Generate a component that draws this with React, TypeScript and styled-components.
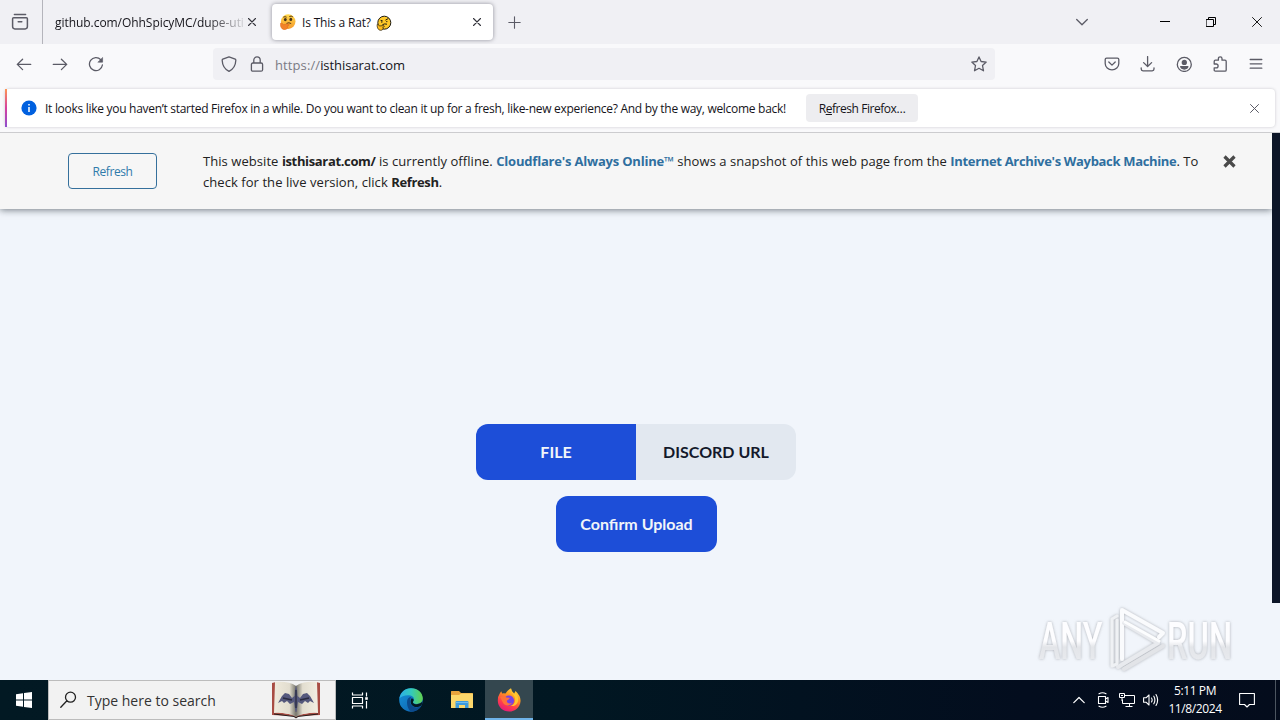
import * as React from "react";
import { FC, ReactNode } from "react";
import styled, { createGlobalStyle } from "styled-components";

const GlobalStyle = createGlobalStyle`
  * {
    box-sizing: border-box;
  }

  body {
    margin: 0;
    overflow: hidden;
    font-family: "Open Sans", "Noto Sans", sans-serif;
    color: #15141a;
  }

  svg {
    display: block;
    flex: none;
  }
`;

type IconProps = {
  size?: number;
  color?: string;
  weight?: number;
  children: ReactNode;
};

const Icon: FC<IconProps> = ({ size = 16, color = "#5b5b66", weight = 1.3, children }) => (
  <svg
    width={size}
    height={size}
    viewBox={`0 0 ${size} ${size}`}
    fill="none"
    stroke={color}
    strokeWidth={weight}
    strokeLinecap="round"
    strokeLinejoin="round"
  >
    {children}
  </svg>
);

const CrossIcon: FC<{ size: number; color: string; weight: number }> = (props) => (
  <Icon {...props}>
    <path d={`M.5 .5L${props.size - 0.5} ${props.size - 0.5}M${props.size - 0.5} .5L.5 ${props.size - 0.5}`} />
  </Icon>
);

const ThinkingFace: FC = () => (
  <svg width="16" height="16" viewBox="0 0 16 16">
    <defs>
      <linearGradient id="face" x1="0" y1="0" x2="0" y2="1">
        <stop offset="0" stopColor="#ffd84a" />
        <stop offset="1" stopColor="#f59a2c" />
      </linearGradient>
    </defs>
    <circle cx="8.2" cy="7.6" r="7.3" fill="url(#face)" />
    <ellipse cx="5.3" cy="5.6" rx="1.4" ry="1.6" fill="#42301a" />
    <ellipse cx="10.8" cy="5.4" rx="1.4" ry="1.6" fill="#42301a" />
    <path d="M3.3 3.2Q5 2.2 6.6 3.2M9.3 2.6Q11.2 1.5 12.8 2.8M6.5 9.4Q9 8 11.2 9.6" fill="none" stroke="#5a3a16" strokeWidth="1" />
    <path
      d="M.6 9.2C1.8 8.4 2.8 9.7 3.2 10.8L8.3 9.9C9.6 10 9.4 11.5 8.4 11.7L7 12C8.2 13 7.6 15.2 5.3 15.6C2.2 16 0 13.2 .6 9.2Z"
      fill="#f2832a"
      stroke="#e06d1c"
      strokeWidth=".6"
    />
  </svg>
);

const OutlinedFace: FC = () => (
  <svg width="16" height="16" viewBox="0 0 16 16" fill="none" stroke="#1d1a12" strokeWidth="1">
    <circle cx="8.3" cy="7.7" r="6.5" fill="#ffc928" />
    <path d="M4.6 5.4L6.6 5.8M9.4 5.2L12.2 3.6M6.4 9.7Q8.5 8.4 11 9.2" />
    <circle cx="5.8" cy="7" r=".7" fill="#1d1a12" stroke="none" />
    <circle cx="10.8" cy="6.6" r=".7" fill="#1d1a12" stroke="none" />
    <path
      d="M1.2 9.4C2 8.8 3 10.2 3.3 11L7.6 10.6C8.6 10.8 8.6 11.8 7.6 12L6.8 12.2C7.6 13.4 7 15 5.2 15.3C2.6 15.6 .8 13 1.2 9.4Z"
      fill="#ffbd1e"
      strokeWidth=".7"
    />
  </svg>
);

const TitleBar: FC = () => (
  <TabStrip>
    <ViewButton>
      <Icon size={18} weight={1.5}>
        <path d="M3.4 1.6H14.6M2.6 4.8H15.4Q16.4 4.8 16.4 5.8V13.6Q16.4 15.9 14.1 15.9H3.9Q1.6 15.9 1.6 13.6V5.8Q1.6 4.8 2.6 4.8ZM7.2 8.8H10.8" />
      </Icon>
    </ViewButton>
    <Tab>
      <TabTitle $fade $spacing={-0.05}>
        github.com/OhhSpicyMC/dupe-uti
      </TabTitle>
      <CrossIcon size={8} color="#33333b" weight={1.1} />
    </Tab>
    <Tab $active>
      <ThinkingFace />
      <TabTitle $spacing={-0.18}>
        Is This a Rat?
        <OutlinedFace />
      </TabTitle>
      <CrossIcon size={8} color="#33333b" weight={1.1} />
    </Tab>
    <NewTab>
      <Icon size={13} weight={1.1}>
        <path d="M6.5 .8V12.2M.8 6.5H12.2" />
      </Icon>
    </NewTab>
    <TabsChevron>
      <Icon size={12}>
        <path d="M.7 3.5L6 8.8L11.3 3.5" />
      </Icon>
    </TabsChevron>
    <WindowButton>
      <Icon size={10} color="#000" weight={1}>
        <path d="M0 4.5H10" />
      </Icon>
    </WindowButton>
    <WindowButton>
      <Icon size={10} color="#000" weight={1}>
        <path d="M.5 2.5H7.5V9.5H.5ZM2.5 2.5V.5H9.5V7.5H7.5" />
      </Icon>
    </WindowButton>
    <WindowButton>
      <CrossIcon size={10} color="#000" weight={0.9} />
    </WindowButton>
  </TabStrip>
);

const NavBar: FC = () => (
  <Toolbar>
    <ToolGroup>
      <ToolButton>
        <Icon>
          <path d="M14.7 8.4H1.3M6.6 3.2L1.3 8.4L6.6 13.6" />
        </Icon>
      </ToolButton>
      <ToolButton>
        <Icon>
          <path d="M1.3 8.4H14.7M9.4 3.2L14.7 8.4L9.4 13.6" />
        </Icon>
      </ToolButton>
      <ToolButton>
        <Icon>
          <path d="M12.8 3.8A6.5 6.5 0 1 0 14.4 9" />
          <path d="M14.6 1.8V6.2H10.2Z" fill="#5b5b66" strokeWidth=".6" />
        </Icon>
      </ToolButton>
    </ToolGroup>
    <UrlBar>
      <Icon>
        <path d="M8 .8L14.2 3.2Q14.9 3.5 14.8 4.4C14.6 9.6 12.4 13 8 15.3C3.6 13 1.4 9.6 1.2 4.4Q1.1 3.5 1.8 3.2Z" />
      </Icon>
      <Icon>
        <path d="M4.8 7V4.1A3.2 3.2 0 0 1 11.2 4.1V7M3.9 7H12.1Q13.6 7 13.6 8.5V13.7Q13.6 15.2 12.1 15.2H3.9Q2.4 15.2 2.4 13.7V8.5Q2.4 7 3.9 7Z" />
      </Icon>
      <Address>
        <Scheme>https://</Scheme>isthisarat.com
      </Address>
      <Icon>
        <path d="M8 .9L10.1 5.5L15.2 6.1L11.5 9.5L12.5 14.8L8 12.3L3.5 14.8L4.5 9.5L.8 6.1L5.9 5.5Z" />
      </Icon>
    </UrlBar>
    <ToolGroup>
      <ToolButton>
        <Icon>
          <path d="M2.6 2.2H13.4Q14.8 2.2 14.8 3.6V7.4A6.8 6.4 0 0 1 1.2 7.4V3.6Q1.2 2.2 2.6 2.2ZM4.8 6L8 9.1L11.2 6" />
        </Icon>
      </ToolButton>
      <ToolButton>
        <Icon>
          <path d="M7.6 .6V10.4M3.6 6.6L7.6 10.5L11.6 6.6M1.2 11.8V13Q1.2 14.8 3 14.8H12.2Q14 14.8 14 13V11.8" />
        </Icon>
      </ToolButton>
      <ToolButton>
        <Icon>
          <circle cx="8.3" cy="8.4" r="7" />
          <circle cx="8.3" cy="6.4" r="2" fill="#5b5b66" />
          <path d="M4.7 10.7H11.9Q11.3 13 8.3 13Q5.3 13 4.7 10.7Z" fill="#5b5b66" />
        </Icon>
      </ToolButton>
      <ToolButton>
        <Icon>
          <path d="M6.4 4.2V2.6A1.8 1.8 0 0 1 10 2.6V4.2H13Q14.2 4.2 14.2 5.4V13.9Q14.2 15.1 13 15.1H3.4Q2.2 15.1 2.2 13.9V11.8H4.2A1.9 1.9 0 0 0 4.2 8H2.2V5.4Q2.2 4.2 3.4 4.2Z" />
        </Icon>
      </ToolButton>
      <ToolButton>
        <Icon>
          <path d="M2.2 3.5H13.8M2.2 7.8H13.8M2.2 12.2H13.8" />
        </Icon>
      </ToolButton>
    </ToolGroup>
  </Toolbar>
);

const Notification: FC = () => (
  <NotificationArea>
    <NotificationBox>
      <svg width="16" height="16" viewBox="0 0 16 16">
        <circle cx="8" cy="8" r="7.6" fill="#0060df" />
        <path d="M8 4V5.4M8 7V12" stroke="#fff" strokeWidth="1.5" />
      </svg>
      <NotificationText>
        It looks like you haven’t started Firefox in a while. Do you want to clean it up for a fresh, like-new
        experience? And by the way, welcome back!
      </NotificationText>
      <NotificationButton>
        R<u>e</u>fresh Firefox…
      </NotificationButton>
      <CrossIcon size={9} color="#5b5b66" weight={1} />
    </NotificationBox>
  </NotificationArea>
);

const OfflineBanner: FC = () => (
  <Banner>
    <BannerButton>Refresh</BannerButton>
    <BannerText>
      This website <Strong>isthisarat.com/</Strong> is currently offline.{" "}
      <BannerLink $spacing={-0.2}>Cloudflare's Always Online™</BannerLink> shows a snapshot of this web page from the{" "}
      <BannerLink $spacing={-0.33}>Internet Archive's Wayback Machine</BannerLink>. To
      <br />
      check for the live version, click <Strong>Refresh</Strong>.
    </BannerText>
    <svg width="13" height="13" viewBox="0 0 13 13">
      <path d="M1.5 1.5L11.5 11.5M11.5 1.5L1.5 11.5" stroke="#4a4a4a" strokeWidth="3.2" />
    </svg>
  </Banner>
);

const Watermark: FC = () => (
  <WatermarkBox>
    <svg width="220" height="76" viewBox="0 0 220 76">
      <defs>
        <linearGradient id="mark" x1="0" y1="0" x2="0" y2="1">
          <stop offset=".5" stopColor="#fdfdff" />
          <stop offset=".6" stopColor="#e3e5e9" />
          <stop offset="1" stopColor="#eceef2" />
        </linearGradient>
        <filter id="markShadow" x="-10%" y="-10%" width="120%" height="120%">
          <feDropShadow dx="0" dy="0" stdDeviation="1.5" floodColor="#8d9096" floodOpacity=".7" />
        </filter>
      </defs>
      <g filter="url(#markShadow)">
        <g fill="url(#mark)" fontFamily="Roboto, sans-serif" fontSize="51" fontWeight="500">
          <text transform="translate(8 55) scale(.63 1)">ANY</text>
          <text transform="translate(136 55) scale(.64 1)">RUN</text>
        </g>
        <g fill="none" strokeLinejoin="round" strokeLinecap="round">
          <path d="M91 55V6L132 29L128 33" stroke="#fafbfd" strokeWidth="4" />
          <path d="M86 12L81 15V62L86 60V16" stroke="#eff1f4" strokeWidth="3" />
          <path d="M93 19L127 39L87 63" stroke="#e8eaee" strokeWidth="4" />
          <path d="M132 42L93 65" stroke="#e2e4e8" strokeWidth="4" />
          <path d="M94 18L128 37" stroke="#fcfdfe" strokeWidth="3" />
        </g>
      </g>
    </svg>
  </WatermarkBox>
);

const BookIcon: FC = () => (
  <svg width="48" height="38" viewBox="0 0 48 38">
    <defs>
      <linearGradient id="leftPage">
        <stop offset="0" stopColor="#efeadc" />
        <stop offset=".7" stopColor="#e2ddcf" />
        <stop offset="1" stopColor="#77766c" />
      </linearGradient>
      <linearGradient id="rightPage">
        <stop offset="0" stopColor="#77766c" />
        <stop offset=".3" stopColor="#e2ddcf" />
        <stop offset="1" stopColor="#f2eee2" />
      </linearGradient>
    </defs>
    <path d="M0 2L4 1V31L23 34L25 34L44 31V1L48 2V34L27 35L24 37L21 35L0 34Z" fill="#a84c43" />
    <path d="M3 1Q17 0 24 5V36Q15 31 2 32Z" fill="url(#leftPage)" />
    <path d="M45 1Q31 0 24 5V36Q33 31 46 32Z" fill="url(#rightPage)" />
    <path
      d="M24 4L25 9L25.5 15L28 17L31 13L35 12L38 15L42 22L38 20L36 22L33 20L30 23L26 21L24.5 31L23.5 31L22 21L18 23L15 20L12 22L10 20L6 22L10 15L13 12L17 13L20 17L22.5 15L23 9Z"
      fill="#55587c"
    />
    <path d="M11 17L20 19M37 17L28 19M24 9V27" stroke="#2a2b40" strokeWidth="1.3" />
    <path d="M2 33L22 35.5L24 37L26 35.5L46 33" fill="none" stroke="#231c1b" strokeWidth="1" />
  </svg>
);

const EdgeIcon: FC = () => (
  <svg width="24" height="24" viewBox="0 0 24 24">
    <defs>
      <linearGradient id="edgeTop">
        <stop offset="0" stopColor="#2caee8" />
        <stop offset=".5" stopColor="#33c9bd" />
        <stop offset="1" stopColor="#62d14c" />
      </linearGradient>
      <linearGradient id="edgeBase" x1="0" y1="0" x2="1" y2="1">
        <stop offset="0" stopColor="#1694db" />
        <stop offset="1" stopColor="#0d5ba8" />
      </linearGradient>
    </defs>
    <circle cx="12" cy="12" r="11.8" fill="url(#edgeBase)" />
    <path d="M.4 10.5C1.5 4 6 .2 12 .2C19 .2 23.8 5 23.8 10.3C23.8 14 21 16 17.8 16C15 16 13.5 15 14 13.8C16.4 11 14.3 7.5 10 7.2C5.6 7 1.8 8.4 .4 10.5Z" fill="url(#edgeTop)" />
    <path d="M8 14C8 10.8 10 9 12.2 9C10 12.5 10.7 18.8 17.3 19.4C19.5 19.5 21.3 18.7 22.4 17.8C20.2 21.7 16.5 23.9 12.3 23.8C9.6 22.2 8 18 8 14Z" fill="#0c4a8c" />
    <path d="M14.3 13.2C13.2 14.7 14.8 16.3 18 16.2C20.5 16 22.3 15 23.3 13.6C23.2 15.5 22.9 16.6 22.4 17.6C20 19.4 15.7 19.9 13 17.3C11.4 15.7 11 12 12.6 10.2C14.6 10.4 15.3 12 14.3 13.2Z" fill="#041923" />
  </svg>
);

const FolderIcon: FC = () => (
  <svg width="22" height="20" viewBox="0 0 22 20">
    <path d="M0 1.5Q0 1 .5 1H8L10 3H21Q22 3 22 4V18H0Z" fill="#e8a33d" />
    <path d="M1 5H8L10 3.5H22V18H0V5Z" fill="#fcd76b" />
    <path d="M4.5 18V12Q4.5 11 5.5 11H16.5Q17.5 11 17.5 12V18H14V15H8V18Z" fill="#3e9bdc" />
    <path d="M5 12.5H17" stroke="#6fbdf0" />
  </svg>
);

const FirefoxIcon: FC = () => (
  <svg width="24" height="24" viewBox="0 0 24 24">
    <defs>
      <linearGradient id="fox" x1=".8" y1="0" x2=".3" y2="1">
        <stop offset="0" stopColor="#ffe045" />
        <stop offset=".35" stopColor="#ff9a1f" />
        <stop offset=".7" stopColor="#ff3d4a" />
        <stop offset="1" stopColor="#e3197d" />
      </linearGradient>
    </defs>
    <path d="M2.6 5.8L4.2 3.3L5.2 5.4Q7 5 8.5 5.6Q10.7 2 14 .2Q14.3 3.5 17.2 5.4L18.5 3Q24 8 23.5 13.5C23 19.5 18 23.6 12.2 23.6C5.8 23.6 .8 18.8 .8 12.8Q.7 8.5 2.6 5.8Z" fill="url(#fox)" />
    <circle cx="12" cy="12.6" r="5.1" fill="#7542e5" />
    <path d="M3.2 9C5 7.7 8 8 9.3 9.4L12.7 9.8C12.8 11.3 10.4 11.8 9.8 12.7C9.7 15.4 12.7 16.2 15 14.8C13.5 18.2 7.8 18.4 5.8 14.5Z" fill="#ff7139" />
    <path d="M14 .4C13 5.1 18.4 6.3 18.2 12C18.1 15.4 16 17.5 13.5 18C20 18.8 23 13 20.1 7.2L18.3 4.2L17.6 6.4C15.3 5 14.2 2.5 14 .4Z" fill="#ffc72e" />
  </svg>
);

const Taskbar: FC = () => (
  <TaskbarBox>
    <StartButton>
      <svg width="16" height="16" viewBox="0 0 16 16" fill="#fff">
        <path d="M0 2.2L7 1.2V7.5H0ZM8 1L16 0V7.5H8ZM0 8.5H7V14.8L0 13.8ZM8 8.5H16V16L8 15Z" />
      </svg>
    </StartButton>
    <SearchBox>
      <Icon size={18} color="#222" weight={1.3}>
        <path d="M15.5 6.2A5 5 0 1 1 5.5 6.2A5 5 0 1 1 15.5 6.2ZM6.9 9.8L.8 16.2" />
      </Icon>
      <SearchText>Type here to search</SearchText>
      <BookIcon />
    </SearchBox>
    <TaskButton $width={48}>
      <Icon size={18} color="#fff" weight={1.2}>
        <path d="M1.5 1.5V4H11.5V1.5M1.5 6.5H11.5V12.5H1.5ZM1.5 17.5V15H11.5V17.5M15.5 1.5V5.5M15.5 10V17.5" strokeLinecap="butt" />
        <path d="M14.2 6.2H16.8V8.8H14.2Z" fill="#fff" stroke="none" />
      </Icon>
    </TaskButton>
    <TaskButton $width={54}>
      <EdgeIcon />
    </TaskButton>
    <TaskButton $width={47}>
      <FolderIcon />
    </TaskButton>
    <TaskButton $width={48} $active>
      <FirefoxIcon />
    </TaskButton>
    <Tray>
      <TrayCell>
        <Icon size={12} color="#fff" weight={1.2}>
          <path d="M.8 8.7L6 3.5L11.2 8.7" />
        </Icon>
      </TrayCell>
      <TrayCell>
        <Icon color="#fff" weight={1.1}>
          <path d="M3.5 4.5H10.5V11.5H3.5ZM10.5 7L13 5.5V10.5L10.5 9M4 1.8Q7.5 -.3 11 1.8M4 14.2Q7.5 16.3 11 14.2" />
        </Icon>
      </TrayCell>
      <TrayCell>
        <Icon color="#fff" weight={1}>
          <path d="M5.5 3.5H15.5V11.5H3.5V7.5M10.5 11.5V14.5M6.5 14.5H13.5M.5 1.5H5.5V5.5H.5ZM3 5.5V9M2 3.5H4" strokeLinecap="butt" />
        </Icon>
      </TrayCell>
      <TrayCell>
        <Icon color="#fff" weight={1.1}>
          <path d="M.6 5.8H3L6 3V13L3 10.2H.6ZM8.5 6Q9.8 8 8.5 10M10.8 4.2Q13 8 10.8 11.8M13 2.5Q16.3 8 13 13.5" />
        </Icon>
      </TrayCell>
      <Clock>
        <span>5:11 PM</span>
        <span>11/8/2024</span>
      </Clock>
      <ActionCenter>
        <Icon color="#fff" weight={1.1}>
          <path d="M.6 1.5H15.4V12.5H10.5L8 15L5.5 12.5H.6Z" />
        </Icon>
      </ActionCenter>
      <ShowDesktop />
    </Tray>
  </TaskbarBox>
);

const App: FC = () => (
  <Screen>
    <GlobalStyle />
    <TitleBar />
    <NavBar />
    <Notification />
    <Viewport>
      <PageBody>
        <OfflineBanner />
        <Uploader>
          <Toggle>
            <ToggleOption $selected>FILE</ToggleOption>
            <ToggleOption>DISCORD URL</ToggleOption>
          </Toggle>
          <ConfirmButton>Confirm Upload</ConfirmButton>
        </Uploader>
      </PageBody>
      <ScrollTrack />
      <Watermark />
    </Viewport>
    <Taskbar />
  </Screen>
);

export default App;

const Screen = styled.div`
  display: flex;
  flex-direction: column;
  width: 1280px;
  height: 720px;
  overflow: hidden;
  background: #f9f9fb;
`;

const TabStrip = styled.div`
  display: flex;
  align-items: center;
  height: 44px;
  background: #f0f0f4;
`;

const ViewButton = styled.div`
  display: flex;
  align-items: center;
  justify-content: center;
  width: 43px;
  height: 44px;
  padding-right: 2px;
  border-right: 1px solid #b4b4bb;
`;

const Tab = styled.div<{ $active?: boolean }>`
  display: flex;
  align-items: center;
  gap: ${(props) => (props.$active ? "6px" : "4px")};
  width: ${(props) => (props.$active ? "221px" : "213px")};
  height: 36px;
  margin-left: ${(props) => (props.$active ? "16px" : "0")};
  padding: ${(props) => (props.$active ? "0 12px 0 8px" : "0 0 0 12px")};
  border-radius: 4px;
  background: ${(props) => (props.$active ? "#fff" : "transparent")};
  box-shadow: ${(props) => (props.$active ? "0 0 4px rgba(90, 90, 105, 0.65)" : "none")};
`;

const TabTitle = styled.div<{ $fade?: boolean; $spacing: number }>`
  display: flex;
  flex: 1;
  align-items: center;
  gap: 5px;
  padding-top: 1px;
  font-size: 12px;
  letter-spacing: ${(props) => props.$spacing}px;
  white-space: nowrap;
  mask-image: ${(props) => (props.$fade ? "linear-gradient(to right, #000 80%, transparent 103%)" : "none")};
`;

const NewTab = styled.div`
  display: flex;
  margin-left: 15px;
`;

const TabsChevron = styled.div`
  display: flex;
  margin-right: 54px;
  margin-left: auto;
`;

const WindowButton = styled.div`
  display: flex;
  align-items: center;
  justify-content: center;
  width: 46px;
  height: 44px;
`;

const Toolbar = styled.div`
  display: flex;
  align-items: center;
  justify-content: space-between;
  height: 40px;
  padding: 0 6px;
  background: #f9f9fb;
`;

const ToolGroup = styled.div`
  display: flex;
`;

const ToolButton = styled.div`
  display: flex;
  align-items: center;
  justify-content: center;
  width: 36px;
  height: 32px;
`;

const UrlBar = styled.div`
  display: flex;
  align-items: center;
  gap: 12px;
  width: 782px;
  height: 32px;
  padding: 0 8px;
  border-radius: 4px;
  background: #f0f0f4;
`;

const Address = styled.div`
  flex: 1;
  margin-left: -2px;
  padding-top: 2px;
  font-size: 13px;
  letter-spacing: -0.05px;
`;

const Scheme = styled.span`
  color: #7b7b84;
  letter-spacing: 0.1px;
`;

const NotificationArea = styled.div`
  height: 49px;
  padding: 5px 5px 0;
  border-bottom: 1px solid #cccccf;
`;

const NotificationBox = styled.div`
  display: flex;
  align-items: center;
  height: 38px;
  padding: 0 16px 0 14px;
  border-left: 2px solid;
  border-image: linear-gradient(#ff9a50, #d6409f 50%, #8a4fd0) 1;
  border-radius: 4px;
  background: #fff;
  box-shadow: 0 0 3px rgba(58, 57, 68, 0.25);
`;

const NotificationText = styled.div`
  width: 745px;
  margin-left: 8px;
  padding-top: 1px;
  font-size: 12px;
  letter-spacing: -0.29px;
  white-space: nowrap;
`;

const NotificationButton = styled.div`
  width: 112px;
  height: 28px;
  margin-right: auto;
  margin-left: 16px;
  border-radius: 4px;
  background: #ededf0;
  font-size: 12px;
  letter-spacing: -0.45px;
  line-height: 29px;
  text-align: center;
`;

const Viewport = styled.div`
  position: relative;
  display: flex;
  height: 547px;
  background: #f1f5fb;
`;

const PageBody = styled.div`
  width: 1272px;
  overflow: hidden;
`;

const ScrollTrack = styled.div`
  width: 8px;
  height: 470px;
  background: #0d1628;
`;

const Banner = styled.div`
  display: flex;
  align-items: flex-start;
  height: 76px;
  padding: 20px 36px 0 68px;
  background: #f6f6f6;
  box-shadow: 0 1px 7px rgba(30, 40, 50, 0.6);
`;

const BannerButton = styled.div`
  flex: none;
  width: 89px;
  height: 36px;
  border: 1px solid #35709c;
  border-radius: 4px;
  color: #2f7bab;
  font-size: 12px;
  letter-spacing: -0.4px;
  line-height: 36px;
  text-align: center;
`;

const BannerText = styled.div`
  flex: 1;
  margin: -2px 0 0 46px;
  color: #222;
  font-size: 13px;
  letter-spacing: 0.06px;
  line-height: 21px;
  white-space: nowrap;

  & + svg {
    margin-top: 2px;
  }
`;

const Strong = styled.b`
  letter-spacing: -0.35px;
`;

const BannerLink = styled.b<{ $spacing: number }>`
  color: #2f6f9f;
  letter-spacing: ${(props) => props.$spacing}px;
`;

const Uploader = styled.div`
  display: flex;
  flex-direction: column;
  align-items: center;
  gap: 16px;
  padding-top: 215px;
  font-family: Lato, sans-serif;
  font-size: 16px;
  font-weight: 700;
  line-height: 56px;
  text-align: center;
`;

const Toggle = styled.div`
  display: flex;
  width: 320px;
  overflow: hidden;
  border-radius: 12px;
`;

const ToggleOption = styled.div<{ $selected?: boolean }>`
  flex: 1;
  background: ${(props) => (props.$selected ? "#1d4ed8" : "#e2e8f0")};
  color: ${(props) => (props.$selected ? "#f1f5f9" : "#14192b")};
`;

const ConfirmButton = styled.div`
  width: 161px;
  margin-left: 1px;
  border-radius: 12px;
  background: #1d4ed8;
  color: #f1f5f9;
`;

const WatermarkBox = styled.div`
  position: absolute;
  right: 29px;
  bottom: 0;
`;

const TaskbarBox = styled.div`
  display: flex;
  height: 40px;
  background: linear-gradient(to right, #021923, #011722 45%, #030d1e 80%, #040c1c);
`;

const StartButton = styled.div`
  display: flex;
  align-items: center;
  justify-content: center;
  width: 48px;
`;

const SearchBox = styled.div`
  display: flex;
  align-items: center;
  width: 288px;
  padding: 0 15px 0 11px;
  border: 1px solid #bcbcbc;
  background: #f2f2f2;
`;

const SearchText = styled.div`
  flex: 1;
  margin-left: 9px;
  padding-top: 1px;
  color: #333;
  font-size: 14px;
  white-space: nowrap;
`;

const TaskButton = styled.div<{ $width: number; $active?: boolean }>`
  display: flex;
  align-items: center;
  justify-content: center;
  width: ${(props) => props.$width}px;
  padding-top: 2px;
  border-bottom: 2px solid ${(props) => (props.$active ? "#6fb4ea" : "transparent")};
  background: ${(props) => (props.$active ? "#34474f" : "transparent")};
`;

const Tray = styled.div`
  display: flex;
  align-items: center;
  margin-left: auto;
`;

const TrayCell = styled.div`
  display: flex;
  justify-content: center;
  width: 24px;
`;

const Clock = styled.div`
  display: flex;
  flex-direction: column;
  align-items: center;
  width: 64px;
  color: #fff;
  font-size: 12px;
  letter-spacing: -0.4px;
  line-height: 18px;
`;

const ActionCenter = styled.div`
  display: flex;
  justify-content: center;
  width: 40px;
`;

const ShowDesktop = styled.div`
  width: 5px;
  height: 40px;
  margin-left: 8px;
  border-left: 1px solid #4c5560;
`;
